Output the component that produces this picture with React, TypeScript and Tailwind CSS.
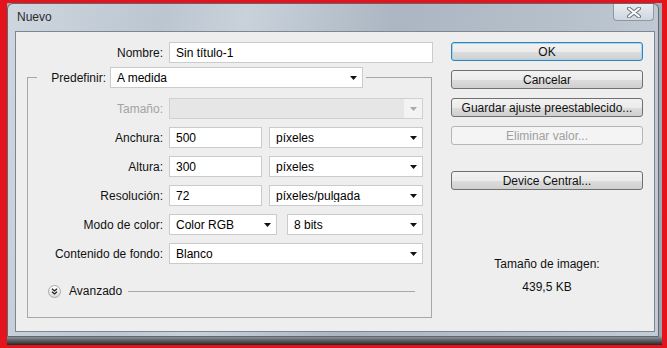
import type { ReactNode } from "react";

function DropArrow({ muted = false }: { muted?: boolean }) {
  return (
    <svg width="7" height="4" viewBox="0 0 7 4" className="shrink-0">
      <path d="M0 0h7L3.5 4z" fill={muted ? "#a9a9a9" : "#111"} />
    </svg>
  );
}

function Select({ value, className = "", disabled = false }: { value: string; className?: string; disabled?: boolean }) {
  return (
    <div
      className={`flex h-[21px] items-center border ${
        disabled ? "border-[#d0d0d0] bg-[#e6e6e6]" : "border-[#cbcbcb] bg-white"
      } ${className}`}
    >
      <span className="flex-1 truncate pl-[6px]">{value}</span>
      <span className={`flex h-full w-[18px] items-center justify-center ${disabled ? "bg-[#f3f3f3]" : ""}`}>
        <DropArrow muted={disabled} />
      </span>
    </div>
  );
}

function Input({ value, className = "" }: { value: string; className?: string }) {
  return (
    <div className={`flex h-[21px] items-center border border-[#cbcbcb] bg-white pl-[6px] ${className}`}>
      {value}
    </div>
  );
}

function Row({ label, muted = false, children }: { label: string; muted?: boolean; children: ReactNode }) {
  return (
    <div className="flex h-[21px] items-center">
      <span className={`mr-[6px] w-[135px] text-right ${muted ? "text-[#a3a3a3]" : "text-[#111]"}`}>{label}</span>
      {children}
    </div>
  );
}

function Button({ label, primary = false, disabled = false }: { label: string; primary?: boolean; disabled?: boolean }) {
  let look = "border-[#707070] bg-[linear-gradient(#f2f2f2_0%,#ebebeb_50%,#dddddd_51%,#cfcfcf_100%)] text-[#111]";
  if (primary)
    look =
      "border-[#3c7fb1] bg-[linear-gradient(#f2f2f2_0%,#ebebeb_50%,#dddddd_51%,#cfcfcf_100%)] text-[#111] shadow-[inset_0_0_0_1px_#9ad9f7]";
  if (disabled) look = "border-[#b5b5b5] bg-[#f4f4f4] text-[#a0a0a0]";
  return (
    <div className={`flex h-[19px] items-center justify-center rounded-[3px] border ${look}`}>
      {label}
    </div>
  );
}

export default function App() {
  return (
    <div className="flex h-[348px] w-[667px] bg-[#e3141c] pb-[3px] pl-[7px] pr-[5px] pt-[3px] font-['Liberation_Sans',Arial,sans-serif] text-[12px] leading-none">
      <div className="flex flex-1 bg-[linear-gradient(to_top,#262626_0px,#6f747a_6px,#9ca3aa_9px,#a3aab1_100%)] pb-[8px] pr-[3px]">
        <div className="flex flex-1 flex-col rounded-t-[6px] border border-[#5d6670] bg-[linear-gradient(100deg,#ced7e0_0%,#bcc6d0_22%,#c9d2db_34%,#abb6c2_55%,#b6c0cb_78%,#c3ccd6_100%)]">
          {/* title bar */}
          <div className="flex h-[27px] items-start">
            <span className="mt-[7px] pl-[9px] text-[12px] text-[#2a2a2a]">Nuevo</span>
            <div className="ml-auto mr-[4px] flex h-[17px] w-[41px] items-center justify-center rounded-b-[4px] border border-t-0 border-[#8d98a3] bg-[linear-gradient(#e8ecf0,#cfd6de)]">
              <svg width="14" height="11" viewBox="0 0 14 11">
                <path d="M2 1.5L12 9.5M12 1.5L2 9.5" stroke="#6d7780" strokeWidth="4" strokeLinecap="round" />
                <path d="M2 1.5L12 9.5M12 1.5L2 9.5" stroke="#ffffff" strokeWidth="2" strokeLinecap="round" />
              </svg>
            </div>
          </div>

          {/* content */}
          <div className="mb-[4px] ml-[7px] mr-[3px] flex flex-1 border border-[#7b8793] bg-[#eeeeee]">
            <div className="flex w-[435px] flex-col pt-[10px]">
              <div className="flex h-[21px] items-center">
                <span className="mr-[6px] w-[147px] text-right text-[#111]">Nombre:</span>
                <Input value="Sin título-1" className="w-[264px]" />
              </div>

              <fieldset className="ml-[11px] mt-[4px] w-[405px] min-w-0 border border-[#a7a7a7] pb-[19px]">
                <legend className="ml-[9px] px-[3px]">
                  <div className="flex items-center">
                    <span className="mr-[4px] w-[66px] text-right text-[#111]">Predefinir:</span>
                    <Select value="A medida" className="w-[253px]" />
                  </div>
                </legend>

                <div className="mt-[10px] flex flex-col gap-[8px]">
                  <Row label="Tamaño:" muted>
                    <Select value="" disabled className="w-[254px]" />
                  </Row>
                  <Row label="Anchura:">
                    <Input value="500" className="w-[93px]" />
                    <Select value="píxeles" className="ml-[7px] w-[154px]" />
                  </Row>
                  <Row label="Altura:">
                    <Input value="300" className="w-[93px]" />
                    <Select value="píxeles" className="ml-[7px] w-[154px]" />
                  </Row>
                  <Row label="Resolución:">
                    <Input value="72" className="w-[93px]" />
                    <Select value="píxeles/pulgada" className="ml-[7px] w-[154px]" />
                  </Row>
                  <Row label="Modo de color:">
                    <Select value="Color RGB" className="w-[108px]" />
                    <Select value="8 bits" className="ml-[10px] w-[136px]" />
                  </Row>
                  <Row label="Contenido de fondo:">
                    <Select value="Blanco" className="w-[254px]" />
                  </Row>
                </div>

                <div className="mt-[20px] flex h-[14px] items-center pl-[20px] pr-[16px]">
                  <span className="flex h-[13px] w-[13px] items-center justify-center rounded-full border border-[#a9a9a9] bg-[linear-gradient(#ffffff,#dcdcdc)]">
                    <svg width="7" height="7" viewBox="0 0 7 7">
                      <path d="M1 0.8L3.5 3L6 0.8M1 3.8L3.5 6L6 3.8" fill="none" stroke="#222" strokeWidth="1.2" />
                    </svg>
                  </span>
                  <span className="ml-[8px] text-[#111]">Avanzado</span>
                  <span className="ml-[6px] h-px flex-1 bg-[#a7a7a7]" />
                </div>
              </fieldset>
            </div>

            <div className="flex w-[192px] flex-col pt-[10px]">
              <div className="flex flex-col gap-[9px]">
                <Button label="OK" primary />
                <Button label="Cancelar" />
                <Button label="Guardar ajuste preestablecido..." />
                <Button label="Eliminar valor..." disabled />
              </div>
              <div className="mt-[26px]">
                <Button label="Device Central..." />
              </div>
              <div className="mt-[68px] text-center text-[#111]">Tamaño de imagen:</div>
              <div className="mt-[11px] text-center text-[#111]">439,5 KB</div>
            </div>
          </div>
        </div>
      </div>
    </div>
  );
}
